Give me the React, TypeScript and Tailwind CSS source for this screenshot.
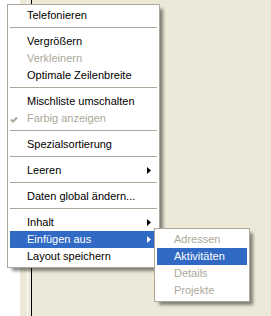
import React from 'react';

type Item =
  | { kind: 'sep' }
  | { kind: 'item'; label: string; disabled?: boolean; checked?: boolean; sub?: boolean; active?: boolean };

const mainItems: Item[] = [
  { kind: 'item', label: 'Telefonieren' },
  { kind: 'sep' },
  { kind: 'item', label: 'Vergrößern' },
  { kind: 'item', label: 'Verkleinern', disabled: true },
  { kind: 'item', label: 'Optimale Zeilenbreite' },
  { kind: 'sep' },
  { kind: 'item', label: 'Mischliste umschalten' },
  { kind: 'item', label: 'Farbig anzeigen', disabled: true, checked: true },
  { kind: 'sep' },
  { kind: 'item', label: 'Spezialsortierung' },
  { kind: 'sep' },
  { kind: 'item', label: 'Leeren', sub: true },
  { kind: 'sep' },
  { kind: 'item', label: 'Daten global ändern...' },
  { kind: 'sep' },
  { kind: 'item', label: 'Inhalt', sub: true },
  { kind: 'item', label: 'Einfügen aus', sub: true, active: true },
  { kind: 'item', label: 'Layout speichern' },
];

const subItems: Item[] = [
  { kind: 'item', label: 'Adressen', disabled: true },
  { kind: 'item', label: 'Aktivitäten', active: true },
  { kind: 'item', label: 'Details', disabled: true },
  { kind: 'item', label: 'Projekte', disabled: true },
];

const Row: React.FC<{ item: Item }> = ({ item }) => {
  if (item.kind === 'sep') {
    return (
      <div className="h-[9px] pt-[3px]">
        <div className="h-px bg-[#ACA899]" />
      </div>
    );
  }
  const color = item.active ? 'bg-[#316AC5] text-white' : item.disabled ? 'text-[#ACA899]' : 'text-black';
  return (
    <div className={`relative flex h-[17px] items-center pl-[17px] pr-[6px] ${color}`}>
      {item.checked && (
        <svg className="absolute left-0 top-[6px]" width="8" height="7" viewBox="0 0 8 7">
          <path d="M1 3.5 L3 5.5 L7 1.5" fill="none" stroke="#ACA899" strokeWidth="2" />
        </svg>
      )}
      <span className="flex-1 whitespace-nowrap leading-[17px]">{item.label}</span>
      {item.sub && (
        <svg width="4" height="7" viewBox="0 0 4 7">
          <polygon points="0,0 4,3.5 0,7" fill={item.active ? '#ffffff' : '#000000'} />
        </svg>
      )}
    </div>
  );
};

export default function App() {
  return (
    <div
      className="relative flex h-[316px] w-[271px] overflow-hidden text-[11px]"
      style={{ fontFamily: '"Liberation Sans", Arial, sans-serif' }}
    >
      {/* window behind the menu */}
      <div className="w-[20px] bg-white" />
      <div className="w-[7px] bg-[#ECE9D8]" />
      <div className="w-px bg-white" />
      <div className="w-[3px] bg-[#ECE9D8]" />
      <div className="w-px bg-black" />
      <div className="flex-1 bg-[#ECE9D8]" />

      {/* context menu */}
      <div className="absolute left-[7px] top-[4px] w-[153px] border border-[#ACA899] bg-white p-[2px] shadow-[4px_4px_3px_-1px_rgba(0,0,0,0.45)]">
        {mainItems.map((it, i) => (
          <Row key={i} item={it} />
        ))}
      </div>

      {/* submenu */}
      <div className="absolute left-[154px] top-[228px] w-[96px] border border-[#ACA899] bg-white p-[2px] shadow-[4px_4px_3px_-1px_rgba(0,0,0,0.45)]">
        {subItems.map((it, i) => (
          <Row key={i} item={it} />
        ))}
      </div>
    </div>
  );
}
